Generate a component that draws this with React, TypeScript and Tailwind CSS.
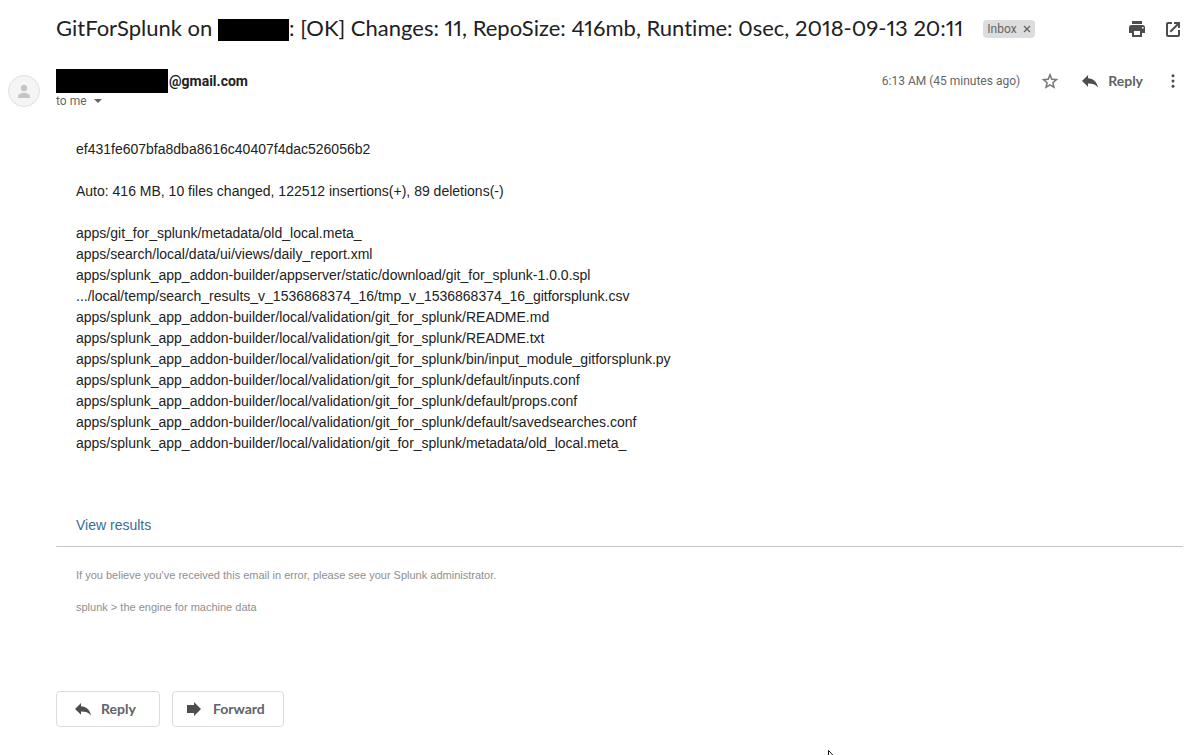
import type { ReactNode } from "react";

const files = [
  "apps/git_for_splunk/metadata/old_local.meta_",
  "apps/search/local/data/ui/views/daily_report.xml",
  "apps/splunk_app_addon-builder/appserver/static/download/git_for_splunk-1.0.0.spl",
  ".../local/temp/search_results_v_1536868374_16/tmp_v_1536868374_16_gitforsplunk.csv",
  "apps/splunk_app_addon-builder/local/validation/git_for_splunk/README.md",
  "apps/splunk_app_addon-builder/local/validation/git_for_splunk/README.txt",
  "apps/splunk_app_addon-builder/local/validation/git_for_splunk/bin/input_module_gitforsplunk.py",
  "apps/splunk_app_addon-builder/local/validation/git_for_splunk/default/inputs.conf",
  "apps/splunk_app_addon-builder/local/validation/git_for_splunk/default/props.conf",
  "apps/splunk_app_addon-builder/local/validation/git_for_splunk/default/savedsearches.conf",
  "apps/splunk_app_addon-builder/local/validation/git_for_splunk/metadata/old_local.meta_",
];

function Icon({ children }: { children: ReactNode }) {
  return (
    <svg viewBox="0 0 20 20" className="w-5 h-5 shrink-0" fill="#4d4d4d" aria-hidden="true">
      {children}
    </svg>
  );
}

function ReplyIcon() {
  return <Icon><path d="M8 4V7.300C13.200 7.600 16.800 10.400 18 16.500C15.200 13.400 12.400 12.500 8 12.600V15.800L2 9.900Z" /></Icon>;
}

export default function App() {
  return (
    <main className="bg-white font-['Roboto',sans-serif] text-[#202124]">
      <header className="flex items-center h-[58px] pl-14 pr-[9px]">
        <h1 className="pb-0.5 font-['Lato',sans-serif] text-[22px] leading-7 whitespace-nowrap proportional-nums [font-variant-ligatures:none]">
          GitForSplunk on <span className="inline-block align-middle w-[71px] h-[22px] bg-black" />: [OK] Changes: 11, RepoSize: 416mb, Runtime: 0sec, 2018-09-13 20:11
        </h1>
        <button className="flex items-center gap-1.5 h-[18px] ml-5 px-1 rounded bg-[#ddd] text-xs text-[#666]">
          Inbox
          <svg viewBox="0 0 8 8" className="w-2 h-2" stroke="#666" strokeWidth="1.4" aria-hidden="true"><path d="M1 1L7 7M7 1L1 7" /></svg>
        </button>
        <div className="flex gap-4 ml-auto">
          <button aria-label="Print all">
            <Icon><path d="M5 2h10v3H5zM4.500 6h11A2.500 2.500 0 0 1 18 8.500V14h-3v4H5v-4H2V8.500A2.500 2.500 0 0 1 4.500 6zM7 12v4h6v-4zM15 8v1.500h1.500V8z" fillRule="evenodd" /></Icon>
          </button>
          <button aria-label="In new window">
            <Icon><path d="M9 3v2H5v11h10v-5h2v5a2 2 0 0 1-2 2H5a2 2 0 0 1-2-2V5a2 2 0 0 1 2-2zM11 3h6v6h-2V6.400l-7 7-1.400-1.400L13.600 5H11z" /></Icon>
          </button>
        </div>
      </header>

      <section className="flex pl-2 pr-[9px] pt-2">
        <svg viewBox="0 0 32 32" className="w-8 h-8 mt-[9px] mr-4 shrink-0" aria-hidden="true">
          <circle cx="16" cy="16" r="15.500" fill="#f5f5f5" stroke="#e0e0e0" />
          <circle cx="16" cy="13" r="3.200" fill="#c6c6c6" />
          <path d="M10 23v-1.500c0-2.500 3.500-3.700 6-3.700s6 1.200 6 3.700V23z" fill="#c6c6c6" />
        </svg>
        <div className="flex-1">
          <div className="flex items-center h-[29px]">
            <span className="w-28 h-6 bg-black" />
            <span className="ml-px text-sm font-bold">@gmail.com</span>
            <span className="ml-auto text-xs text-[#666]">6:13 AM (45 minutes ago)</span>
            <button aria-label="Star" className="ml-5">
              <Icon><path d="M10 1.800l2.300 5.600 6 .5-4.600 4 1.400 5.900L10 14.700l-5.100 3.100 1.400-5.900-4.600-4 6-.5zM10 5.900L8.700 9l-3.300.3L7.900 11.500l-.7 3.200L10 13l2.800 1.700-.7-3.200 2.500-2.200-3.300-.3z" fillRule="evenodd" fill="#777" /></Icon>
            </button>
            <button className="flex items-center gap-2 ml-5 font-['Lato',sans-serif] text-sm font-bold text-[#5f6368]">
              <ReplyIcon />
              Reply
            </button>
            <button aria-label="More" className="ml-5">
              <Icon><circle cx="10" cy="4.800" r="1.500" /><circle cx="10" cy="10" r="1.500" /><circle cx="10" cy="15.200" r="1.500" /></Icon>
            </button>
          </div>
          <button className="flex items-center gap-1.5 h-3 text-xs text-[#666]">
            to me
            <svg viewBox="0 0 10 5" className="w-[10px] h-[5px]" fill="#666" aria-hidden="true"><path d="M1 0H9L5 4z" /></svg>
          </button>
        </div>
      </section>

      <article className="ml-14 mr-[9px] font-['Liberation_Sans',Arial,sans-serif] text-sm leading-[21px] text-[#222]">
        <div className="px-5 pt-8">
          <p>ef431fe607bfa8dba8616c40407f4dac526056b2</p>
          <p className="mt-[21px]">Auto: 416 MB, 10 files changed, 122512 insertions(+), 89 deletions(-)</p>
          <ul className="mt-[21px]">
            {files.map((file) => (
              <li key={file}>{file}</li>
            ))}
          </ul>
          <a href="#results" className="inline-block mt-[61px] text-[#3b6b96]">View results</a>
        </div>
        <footer className="mt-[10px] px-5 pt-5 border-t border-[#c3c7d0] text-[11px] leading-4 text-[#8f8f8f]">
          <p>If you believe you've received this email in error, please see your Splunk administrator.</p>
          <p className="mt-4">splunk &gt; the engine for machine data</p>
        </footer>
      </article>

      <div className="flex gap-3 mt-[76px] ml-14 font-['Lato',sans-serif] text-sm font-bold text-[#5f6368]">
        <button className="flex items-center gap-2 w-[104px] h-9 pl-4 border border-[#dadce0] rounded">
          <ReplyIcon />
          Reply
        </button>
        <button className="flex items-center gap-2 w-28 h-9 pl-3 border border-[#dadce0] rounded">
          <Icon><path d="M2 6h7V3l7 7-7 7v-3H2z" /></Icon>
          Forward
        </button>
      </div>

      {/* mouse pointer, mostly below the fold */}
      <div className="fixed bottom-0 left-[828px] w-2 h-[5px] overflow-hidden pointer-events-none">
        <svg viewBox="0 0 12 19" className="w-3 h-[19px]" fill="#fff" stroke="#111" aria-hidden="true"><path d="M.5.5V16l4-4 3 6 2-1-3-5.500H11z" /></svg>
      </div>
    </main>
  );
}
